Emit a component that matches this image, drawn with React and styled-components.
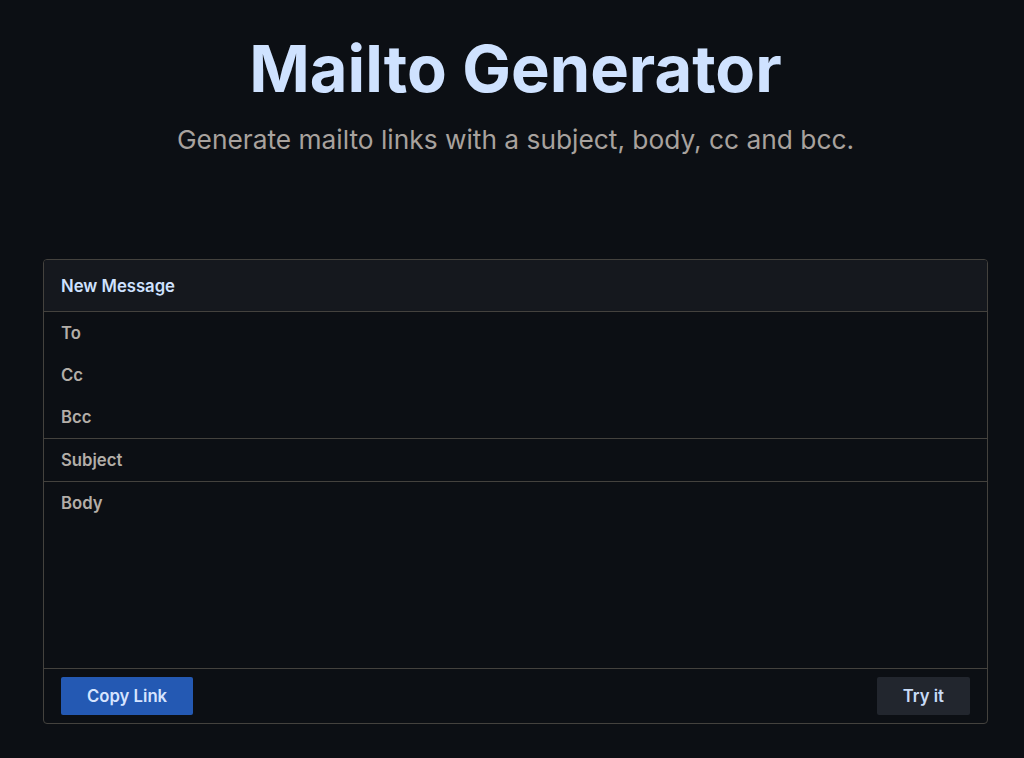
import styled, { createGlobalStyle } from 'styled-components'
import { useState } from 'react'

const GlobalStyle = createGlobalStyle`
  html, body {
    margin: 0;
    padding: 0;
    background: #0c0f14;
  }
  body {
    font-family: Inter, "Noto Sans", sans-serif;
    color: #b3aea8;
  }
`

const lineColor = '#44423e'

const Page = styled.main`
  min-height: 758px;
  padding: 30px 36px 0 43px;
  box-sizing: border-box;
`

const Hero = styled.header`
  text-align: center;
  margin-bottom: 103px;
`

const Title = styled.h1`
  margin: 0;
  font-size: 65px;
  font-weight: 700;
  line-height: 78px;
  color: #cfe2ff;
`

const Subtitle = styled.p`
  margin: 16px 0 0;
  font-size: 26.3px;
  line-height: 32px;
  color: #a8a29e;
`

const Card = styled.section`
  border: 1px solid ${lineColor};
  border-radius: 4px;
  overflow: hidden;
  display: flex;
  flex-direction: column;
`

const CardHeader = styled.div`
  background: #15181e;
  height: 51px;
  padding: 0 17px;
  display: flex;
  align-items: center;
  font-size: 16.7px;
  font-weight: 600;
  color: #cfe2ff;
  border-bottom: 1px solid ${lineColor};
`

const Group = styled.div`
  display: flex;
  flex-direction: column;
  border-bottom: 1px solid ${lineColor};
`

const Field = styled.label`
  display: flex;
  align-items: center;
  height: 42px;
  padding: 0 17px;
  gap: 8px;
`

const FieldLabel = styled.span`
  font-size: 16.7px;
  font-weight: 600;
  color: #b3aea8;
`

const Input = styled.input`
  flex: 1;
  background: transparent;
  border: none;
  outline: none;
  color: #e6e6e6;
  font: inherit;
  font-size: 16px;
`

const BodyArea = styled.div`
  height: 187px;
  padding: 11px 17px;
  box-sizing: border-box;
  border-bottom: 1px solid ${lineColor};
  display: flex;
  flex-direction: column;
`

const TextArea = styled.textarea`
  flex: 1;
  background: transparent;
  border: none;
  outline: none;
  resize: none;
  color: #e6e6e6;
  font: inherit;
  font-size: 16px;
`

const Footer = styled.div`
  display: flex;
  justify-content: space-between;
  align-items: center;
  padding: 8px 17px;
`

const Button = styled.button`
  height: 38px;
  padding: 0 26px;
  border: none;
  border-radius: 2px;
  font-family: Inter, "Noto Sans", sans-serif;
  font-size: 16.7px;
  font-weight: 600;
  cursor: pointer;
  color: ${({ $primary }) => ($primary ? '#d6e4ff' : '#c9dcf7')};
  background: ${({ $primary }) => ($primary ? '#2459b3' : '#22262e')};
`

const App = () => {
  const [to, setTo] = useState('')
  const [cc, setCc] = useState('')
  const [bcc, setBcc] = useState('')
  const [subject, setSubject] = useState('')
  const [body, setBody] = useState('')

  return (
    <>
      <GlobalStyle />
      <Page>
        <Hero>
          <Title>Mailto Generator</Title>
          <Subtitle>Generate mailto links with a subject, body, cc and bcc.</Subtitle>
        </Hero>

        <Card>
          <CardHeader>New Message</CardHeader>
          <Group>
            <Field>
              <FieldLabel>To</FieldLabel>
              <Input value={to} onChange={(e) => setTo(e.target.value)} />
            </Field>
            <Field>
              <FieldLabel>Cc</FieldLabel>
              <Input value={cc} onChange={(e) => setCc(e.target.value)} />
            </Field>
            <Field>
              <FieldLabel>Bcc</FieldLabel>
              <Input value={bcc} onChange={(e) => setBcc(e.target.value)} />
            </Field>
          </Group>
          <Group>
            <Field>
              <FieldLabel>Subject</FieldLabel>
              <Input value={subject} onChange={(e) => setSubject(e.target.value)} />
            </Field>
          </Group>
          <BodyArea>
            <FieldLabel>Body</FieldLabel>
            <TextArea value={body} onChange={(e) => setBody(e.target.value)} />
          </BodyArea>
          <Footer>
            <Button $primary>Copy Link</Button>
            <Button>Try it</Button>
          </Footer>
        </Card>
      </Page>
    </>
  )
}

export default App
